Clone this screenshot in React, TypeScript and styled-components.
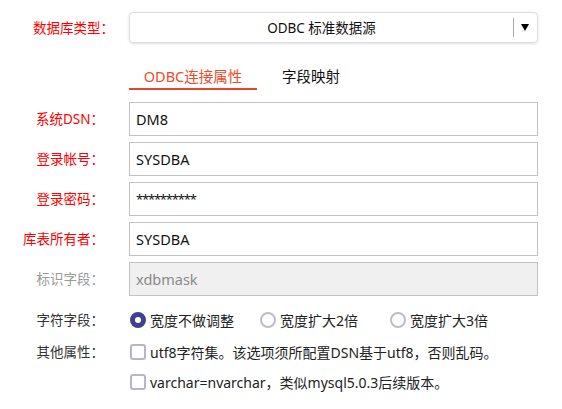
import styled, { createGlobalStyle } from "styled-components";

const GlobalStyle = createGlobalStyle`
    body {
        margin: 0;
        background: #fff;
        font-family: "Noto Sans", "Noto Sans CJK SC", sans-serif;
    }
`;

const Page = styled.div`
    width: 562px;
    height: 409px;
    padding-top: 12px;
    box-sizing: border-box;
    overflow: hidden;
`;

const Row = styled.div<{ $top?: boolean }>`
    display: flex;
    align-items: ${(p) => (p.$top ? "flex-start" : "center")};
`;

const Label = styled.div<{ $tone?: "red" | "gray" | "dark"; $wide?: boolean }>`
    width: ${(p) => (p.$wide ? "114px" : "104px")};
    margin-right: ${(p) => (p.$wide ? "15px" : "25px")};
    flex-shrink: 0;
    text-align: right;
    font-size: 13.5px;
    line-height: 30px;
    white-space: nowrap;
    color: ${(p) => (p.$tone === "red" ? "#ff0000" : p.$tone === "gray" ? "#9a9a9a" : "#333")};
`;

const Select = styled.div`
    width: 409px;
    height: 31px;
    box-sizing: border-box;
    border: 1px solid #dcdce4;
    border-radius: 4px;
    box-shadow: 0 1px 3px rgba(0, 0, 0, 0.12);
    display: flex;
    align-items: center;
`;

const SelectValue = styled.div`
    flex: 1;
    text-align: center;
    font-size: 13.5px;
    line-height: 20px;
    color: #111;
`;

const SelectArrow = styled.div`
    width: 22px;
    height: 19px;
    border-left: 1px solid #a8a8a8;
    display: flex;
    align-items: center;
    justify-content: center;
    margin-right: 1px;
`;

const Tabs = styled.div`
    display: flex;
    margin: 17px 0 12px 129px;
`;

const Tab = styled.div<{ $active?: boolean }>`
    height: 30px;
    box-sizing: border-box;
    padding-top: 2px;
    display: flex;
    align-items: center;
    justify-content: center;
    font-size: 14.5px;
    width: ${(p) => (p.$active ? "128px" : "auto")};
    padding-left: ${(p) => (p.$active ? "0" : "25px")};
    color: ${(p) => (p.$active ? "#f04a2a" : "#111")};
    border-bottom: 2px solid ${(p) => (p.$active ? "#e5472b" : "transparent")};
`;

const Fields = styled.div`
    display: flex;
    flex-direction: column;
    gap: 6px;
`;

const Input = styled.div<{ $disabled?: boolean; $secret?: boolean }>`
    width: 409px;
    height: 34px;
    box-sizing: border-box;
    border: 1px solid #c2c2c2;
    padding: 0 6px;
    display: flex;
    align-items: center;
    font-size: ${(p) => (p.$secret ? "13px" : "14.5px")};
    letter-spacing: ${(p) => (p.$secret ? "-1.2px" : "normal")};
    color: ${(p) => (p.$disabled ? "#8a8a8a" : "#111")};
    background: ${(p) => (p.$disabled ? "#f0f0f0" : "#fff")};
`;

const Options = styled.div`
    margin-top: 9px;
    display: flex;
    flex-direction: column;
    gap: 2px;
`;

const RadioGroup = styled.div`
    display: flex;
`;

const RadioItem = styled.div`
    width: 130px;
    height: 30px;
    display: flex;
    align-items: center;
    font-size: 14px;
    color: #222;
`;

const RadioMark = styled.span<{ $checked?: boolean }>`
    width: 16px;
    height: 16px;
    box-sizing: border-box;
    border-radius: 50%;
    background: #fff;
    border: ${(p) => (p.$checked ? "5px solid #40408e" : "2px solid #bcbccb")};
    margin: 0 4px 0 1px;
    flex-shrink: 0;
`;

const CheckList = styled.div`
    display: flex;
    flex-direction: column;
`;

const CheckItem = styled.div`
    height: 30px;
    display: flex;
    align-items: center;
    font-size: 14px;
    color: #222;
    white-space: nowrap;
`;

const CheckMark = styled.span`
    width: 16px;
    height: 16px;
    box-sizing: border-box;
    border: 2px solid #b6b6c6;
    border-radius: 3px;
    margin: 0 4px 0 1px;
    flex-shrink: 0;
`;

type Field = { label: string; value: string; tone: "red" | "gray"; disabled?: boolean; secret?: boolean };

const fields: Field[] = [
    { label: "系统DSN：", value: "DM8", tone: "red" },
    { label: "登录帐号：", value: "SYSDBA", tone: "red" },
    { label: "登录密码：", value: "**********", tone: "red", secret: true },
    { label: "库表所有者：", value: "SYSDBA", tone: "red" },
    { label: "标识字段：", value: "xdbmask", tone: "gray", disabled: true },
];

const widths = ["宽度不做调整", "宽度扩大2倍", "宽度扩大3倍"];

const App = () => {
    return (
        <Page>
            <GlobalStyle />
            <Row>
                <Label $tone="red" $wide>
                    数据库类型：
                </Label>
                <Select>
                    <SelectValue>ODBC 标准数据源</SelectValue>
                    <SelectArrow>
                        <svg width="8" height="7" viewBox="0 0 8 7">
                            <path d="M0 0 H8 L4 7 Z" fill="#000" />
                        </svg>
                    </SelectArrow>
                </Select>
            </Row>
            <Tabs>
                <Tab $active>ODBC连接属性</Tab>
                <Tab>字段映射</Tab>
            </Tabs>
            <Fields>
                {fields.map((f) => (
                    <Row key={f.label}>
                        <Label $tone={f.tone}>{f.label}</Label>
                        <Input $disabled={f.disabled} $secret={f.secret}>
                            {f.value}
                        </Input>
                    </Row>
                ))}
            </Fields>
            <Options>
                <Row>
                    <Label $tone="dark">字符字段：</Label>
                    <RadioGroup>
                        {widths.map((w, i) => (
                            <RadioItem key={w}>
                                <RadioMark $checked={i === 0} />
                                {w}
                            </RadioItem>
                        ))}
                    </RadioGroup>
                </Row>
                <Row $top>
                    <Label $tone="dark">其他属性：</Label>
                    <CheckList>
                        <CheckItem>
                            <CheckMark />
                            utf8字符集。该选项须所配置DSN基于utf8，否则乱码。
                        </CheckItem>
                        <CheckItem>
                            <CheckMark />
                            varchar=nvarchar，类似mysql5.0.3后续版本。
                        </CheckItem>
                    </CheckList>
                </Row>
            </Options>
        </Page>
    );
};

export default App;
